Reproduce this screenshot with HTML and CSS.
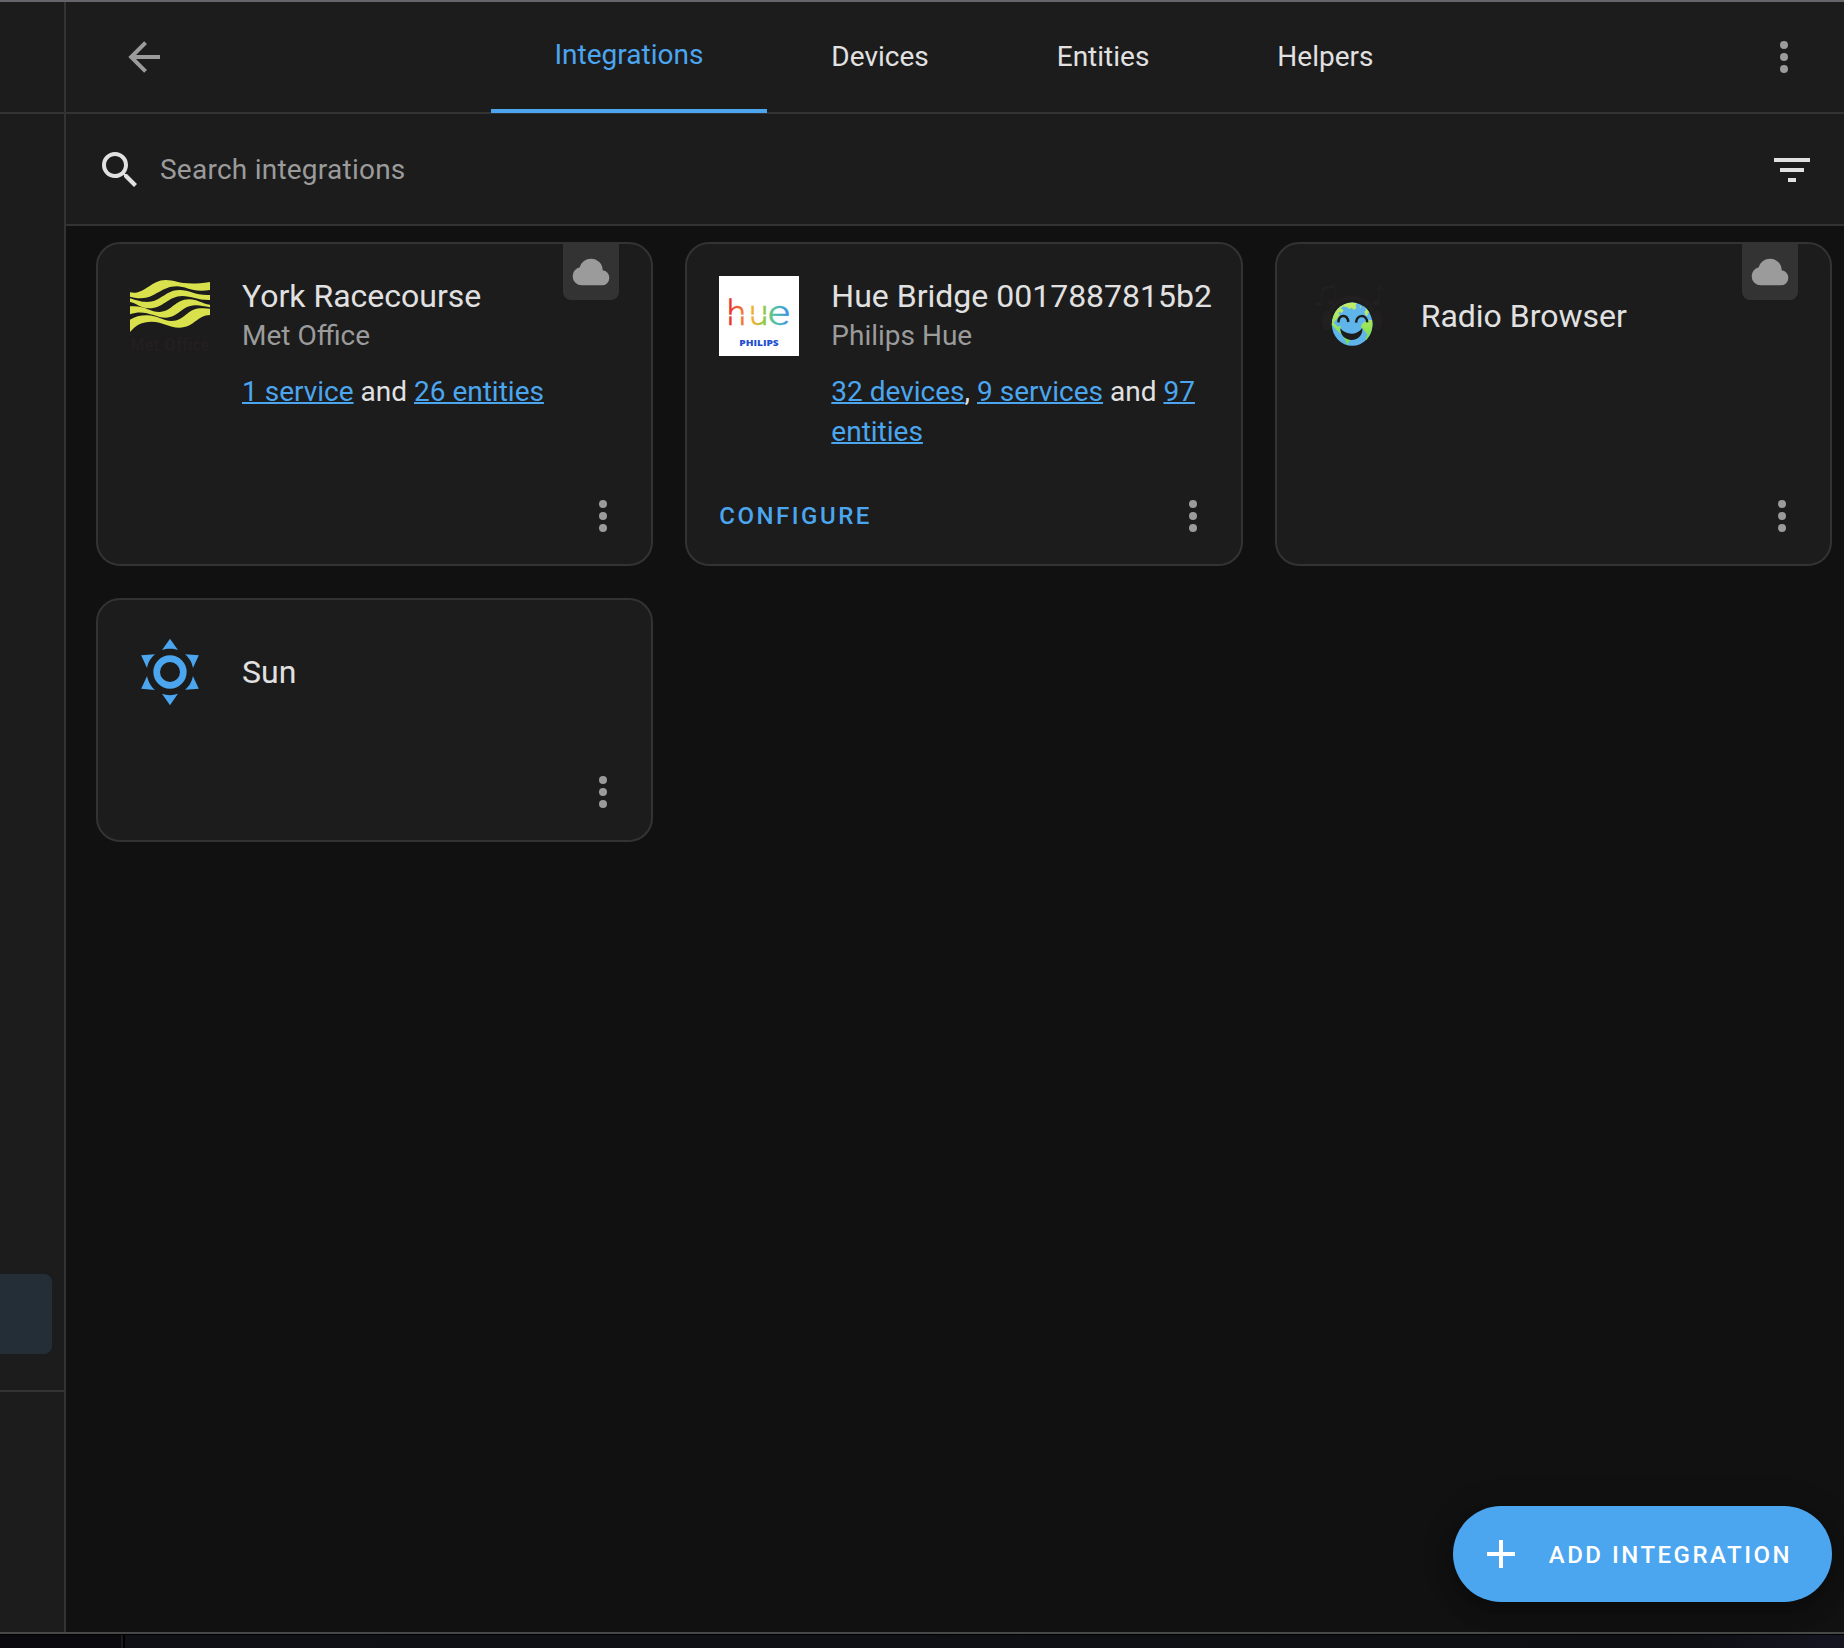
FILE: index.html
```html
<!DOCTYPE html>
<html lang="en">
<head>
<meta charset="utf-8">
<title>Integrations</title>
<link rel="stylesheet" href="styles.css">
</head>
<body>
<svg class="defs" width="0" height="0" aria-hidden="true">
  <symbol id="dots" viewBox="0 0 24 24"><path d="M12,16A2,2 0 0,1 14,18A2,2 0 0,1 12,20A2,2 0 0,1 10,18A2,2 0 0,1 12,16M12,10A2,2 0 0,1 14,12A2,2 0 0,1 12,14A2,2 0 0,1 10,12A2,2 0 0,1 12,10M12,4A2,2 0 0,1 14,6A2,2 0 0,1 12,8A2,2 0 0,1 10,6A2,2 0 0,1 12,4Z"/></symbol>
  <symbol id="cloud" viewBox="0 0 24 24"><path d="M6.5 20Q4.22 20 2.61 18.43 1 16.85 1 14.58 1 12.63 2.17 11.1 3.35 9.57 5.25 9.15 5.88 6.85 7.75 5.43 9.63 4 12 4 14.93 4 16.96 6.04 19 8.07 19 11 20.73 11.2 21.86 12.5 23 13.78 23 15.5 23 17.38 21.69 18.69 20.38 20 18.5 20Z"/></symbol>
</svg>
<div class="window">
  <aside class="sidebar">
    <div class="sidebar-head"></div>
    <div class="sidebar-list"><div class="sidebar-active"></div></div>
    <div class="sidebar-foot"></div>
  </aside>
  <main class="main">
    <header class="toolbar">
      <svg class="icon muted" viewBox="0 0 24 24"><path d="M20,11V13H8L13.5,18.5L12.08,19.92L4.16,12L12.08,4.08L13.5,5.5L8,11H20Z"/></svg>
      <nav class="tabs">
        <a class="tab active">Integrations</a>
        <a class="tab">Devices</a>
        <a class="tab">Entities</a>
        <a class="tab">Helpers</a>
      </nav>
      <svg class="icon muted"><use href="#dots"/></svg>
    </header>
    <div class="search">
      <svg class="icon" viewBox="0 0 24 24"><path d="M9.5,3A6.5,6.5 0 0,1 16,9.5C16,11.11 15.41,12.59 14.44,13.73L14.71,14H15.5L20.5,19L19,20.5L14,15.5V14.71L13.73,14.44C12.59,15.41 11.11,16 9.5,16A6.5,6.5 0 0,1 3,9.5A6.5,6.5 0 0,1 9.5,3M9.5,5C7,5 5,7 5,9.5C5,12 7,14 9.5,14C12,14 14,12 14,9.5C14,7 12,5 9.5,5Z"/></svg>
      <span class="search-label">Search integrations</span>
      <svg class="icon" viewBox="0 0 24 24"><path d="M6,13H18V11H6M3,6V8H21V6M10,18H14V16H10V18Z"/></svg>
    </div>
    <section class="grid">
      <article class="card">
        <div class="badge"><svg class="cloud"><use href="#cloud"/></svg></div>
        <div class="card-head">
          <svg class="logo" viewBox="30 33 240 240">
            <g fill="#d9e24c">
              <path d="M30 82C72 92 92 45 137 45C170 45 185 64 270 51V75C215 83 200 64 170 64C125 64 105 100 62 100C48 100 38 97 30 95Z"/>
              <path d="M30 100C50 106 62 111 80 111C122 111 137 75 178 75C210 75 225 92 270 90V105C235 106 215 93 187 93C145 93 130 130 88 130C60 130 48 113 30 111Z"/>
              <path d="M30 124C75 120 90 141 118 141C155 141 165 103 207 103C235 103 245 117 270 119V127C250 124 240 120 225 121C185 122 175 158 137 158C105 158 75 131 30 148Z"/>
              <path d="M30 164C45 155 60 151 80 151C115 151 125 168 155 168C195 168 200 132 240 130C252 129 260 130 270 131V150C232 150 222 188 178 188C145 188 130 170 95 170C65 170 48 180 30 201Z"/>
            </g>
            <text x="31" y="257" class="met-text" textLength="237" lengthAdjust="spacingAndGlyphs">Met Office</text>
          </svg>
          <div class="titles"><div class="title">York Racecourse</div><div class="subtitle">Met Office</div></div>
        </div>
        <p class="links"><a>1 service</a> and <a>26 entities</a></p>
        <div class="actions"><svg class="icon muted"><use href="#dots"/></svg></div>
      </article>
      <article class="card">
        <div class="card-head">
          <svg class="logo" viewBox="27 33 240 240">
            <defs><linearGradient id="hue" gradientUnits="userSpaceOnUse" x1="58" y1="0" x2="237" y2="0">
              <stop offset="0" stop-color="#e8302f"/><stop offset=".24" stop-color="#ee7d35"/><stop offset=".4" stop-color="#efb135"/><stop offset=".58" stop-color="#93c83e"/><stop offset=".75" stop-color="#52c2a0"/><stop offset="1" stop-color="#3b8fe8"/>
            </linearGradient></defs>
            <rect x="27" y="33" width="240" height="240" fill="#fff"/>
            <text class="hue-text" y="180" fill="url(#hue)"><tspan x="50">h</tspan><tspan x="117">u</tspan><tspan x="173" textLength="67" lengthAdjust="spacingAndGlyphs">e</tspan></text>
            <rect x="50" y="149" width="122" height="5" fill="#fff"/>
            <text class="philips-text" x="88" y="243" textLength="118" lengthAdjust="spacingAndGlyphs">PHILIPS</text>
          </svg>
          <div class="titles"><div class="title">Hue Bridge 0017887815b2</div><div class="subtitle">Philips Hue</div></div>
        </div>
        <p class="links"><a>32 devices</a>, <a>9 services</a> and <a>97 entities</a></p>
        <div class="actions"><span class="configure">CONFIGURE</span><svg class="icon muted"><use href="#dots"/></svg></div>
      </article>
      <article class="card">
        <div class="badge"><svg class="cloud"><use href="#cloud"/></svg></div>
        <div class="card-head">
          <svg class="logo" viewBox="-4 18 240 240">
            <defs>
              <clipPath id="globe"><ellipse cx="125.500" cy="162.500" rx="61" ry="65"/></clipPath>
              <linearGradient id="land" x1="0" y1="0" x2="0" y2="1"><stop offset="0" stop-color="#c8ee6e"/><stop offset="1" stop-color="#76dc4c"/></linearGradient>
            </defs>
            <g fill="#221f20">
              <path d="M58 124C75 62 175 62 192 124L183 126C168 78 82 78 67 126Z"/>
              <ellipse cx="50" cy="151" rx="17" ry="30"/><ellipse cx="200" cy="151" rx="17" ry="30"/>
              <ellipse cx="25" cy="102" rx="11" ry="7"/><ellipse cx="63" cy="97" rx="11" ry="7"/><ellipse cx="196" cy="99" rx="12" ry="8"/>
              <path d="M33 53L74 42V97H70V53L37 62V102H33ZM204 42C209 55 218 52 222 60L208 58V99H204Z"/>
            </g>
            <g clip-path="url(#globe)">
              <rect x="60" y="94" width="130" height="136" fill="#5fb5e9"/>
              <g fill="url(#land)">
                <path d="M108 92L140 98L135 108L139 113L131 120L124 113L118 117L110 112L98 109L91 117L100 121L94 128L84 126L88 136L80 146L70 158L82 170L92 168L89 181L100 187L118 194L131 199L117 212L111 226L105 210L96 195L80 181L66 166L60 170V120L85 98Z"/>
                <path d="M158 105L173 113L181 127L171 129L174 135L166 137L162 125L168 119ZM190 150V200L174 210L168 218L166 204L172 193L158 178L151 170L157 160L166 154L180 150Z"/>
              </g>
              <path d="M92 117L98 119L93 122ZM147 110L153 108L151 114Z" fill="#c8ee6e"/>
            </g>
            <g fill="none" stroke="#1c1c1c" stroke-width="7.500">
              <path d="M84 157C86 132 111 132 114 156"/><path d="M137 158C140 132 168 132 171 157"/>
            </g>
            <path d="M90 175C108 197 140 197 156 174C158 194 144 210 124 210C104 210 90 196 90 175Z" fill="#1c1c1c"/>
          </svg>
          <div class="titles"><div class="title">Radio Browser</div></div>
        </div>
        <div class="actions"><svg class="icon muted"><use href="#dots"/></svg></div>
      </article>
      <article class="card">
        <div class="card-head">
          <svg class="logo sun" viewBox="0 0 24 24"><path d="M12,7A5,5 0 0,1 17,12A5,5 0 0,1 12,17A5,5 0 0,1 7,12A5,5 0 0,1 12,7M12,9A3,3 0 0,0 9,12A3,3 0 0,0 12,15A3,3 0 0,0 15,12A3,3 0 0,0 12,9M12,2L14.39,5.42C13.65,5.15 12.84,5 12,5C11.16,5 10.35,5.15 9.61,5.42L12,2M3.34,7L7.5,6.65C6.9,7.16 6.36,7.78 5.94,8.5C5.5,9.24 5.25,10 5.11,10.79L3.34,7M3.36,17L5.12,13.23C5.26,14 5.53,14.78 5.95,15.5C6.37,16.24 6.91,16.86 7.5,17.37L3.36,17M20.65,7L18.88,10.79C18.74,10 18.47,9.23 18.05,8.5C17.63,7.78 17.1,7.15 16.5,6.64L20.65,7M20.64,17L16.5,17.36C17.09,16.85 17.62,16.22 18.04,15.5C18.46,14.77 18.73,14 18.87,13.21L20.64,17M12,22L9.59,18.56C10.33,18.83 11.14,19 12,19C12.82,19 13.63,18.83 14.37,18.56L12,22Z"/></svg>
          <div class="titles"><div class="title">Sun</div></div>
        </div>
        <div class="actions"><svg class="icon muted"><use href="#dots"/></svg></div>
      </article>
    </section>
    <button class="fab"><svg class="icon" viewBox="0 0 24 24"><path d="M19,13H13V19H11V13H5V11H11V5H13V11H19V13Z"/></svg><span class="fab-label">ADD INTEGRATION</span></button>
  </main>
</div>
<div class="backdrop"><div class="backdrop-left"></div><div class="backdrop-right"></div></div>
</body>
</html>
```
FILE: styles.css
```css
* { box-sizing: border-box; }
body {
  margin: 0;
  width: 1844px;
  height: 1648px;
  overflow: hidden;
  background: #000;
  color: #e1e1e1;
  font: 28px/40px Roboto, sans-serif;
}
.defs { position: absolute; }
.window {
  display: flex;
  height: 1634px;
  border-top: 2px solid #65656c;
  border-bottom: 2px solid #484848;
  background: #111;
}
.sidebar {
  display: flex;
  flex-direction: column;
  width: 66px;
  border-right: 2px solid #333;
  background: #1c1c1c;
}
.sidebar-head { height: 112px; border-bottom: 2px solid #333; }
.sidebar-list {
  flex: 1;
  display: flex;
  flex-direction: column;
  justify-content: flex-end;
  padding: 0 12px 36px 0;
}
.sidebar-active { height: 80px; border-radius: 0 8px 8px 0; background: #242e36; }
.sidebar-foot { height: 242px; border-top: 2px solid #333; }
.main { flex: 1; display: flex; flex-direction: column; min-width: 0; }
.icon { flex: none; display: block; width: 48px; height: 48px; fill: currentColor; }
.muted { color: #9b9b9b; }
.toolbar {
  display: flex;
  align-items: center;
  height: 112px;
  padding: 0 36px 2px 54px;
  background: #1c1c1c;
  box-shadow: inset 0 -2px #333;
}
.tabs { flex: 1; display: flex; justify-content: center; align-self: flex-start; height: 111px; }
.tab {
  display: flex;
  align-items: center;
  padding: 0 64px 1px;
}
.tab.active { color: #4ba6ef; border-bottom: 4px solid #4ba6ef; }
.search {
  display: flex;
  align-items: center;
  gap: 16px;
  height: 112px;
  padding: 0 28px 0 30px;
  background: #1c1c1c;
  box-shadow: inset 0 -2px #333;
}
.search-label { flex: 1; color: #9b9b9b; letter-spacing: .24px; }
.grid {
  display: grid;
  grid-template-columns: repeat(3, 1fr);
  gap: 32px;
  padding: 16px 12px 0 30px;
}
.card {
  position: relative;
  display: flex;
  flex-direction: column;
  min-height: 244px;
  border: 2px solid #333;
  border-radius: 24px;
  background: #1c1c1c;
}
.badge {
  position: absolute;
  top: 0;
  right: 32px;
  padding: 8px;
  border-radius: 0 0 8px 8px;
  background: #333;
  color: #9b9b9b;
}
.cloud { display: block; width: 40px; height: 40px; fill: currentColor; }
.card-head { display: flex; align-items: center; gap: 32px; padding: 32px 0 0 32px; }
.logo { flex: none; width: 80px; height: 80px; overflow: visible; }
.sun { fill: #4ba6ef; }
.titles { white-space: nowrap; }
.title { font-size: 32px; }
.subtitle { color: #9b9b9b; }
.links { margin: 16px 32px 16px 144px; }
.links a {
  color: #4ba6ef;
  text-decoration: underline;
  text-decoration-thickness: 2px;
  text-decoration-skip-ink: none;
}
.actions {
  display: flex;
  align-items: center;
  height: 96px;
  margin-top: auto;
  padding: 0 24px 0 32px;
}
.actions .icon { margin-left: auto; }
.configure { color: #4ba6ef; font-size: 24px; font-weight: 500; letter-spacing: 2.5px; }
.met-text { font: bold 54px "Open Sans", sans-serif; fill: #231f20; }
.hue-text { font: 300 105px Roboto, sans-serif; stroke: url(#hue); stroke-width: 1; }
.philips-text { font: 900 26px "Open Sans", sans-serif; fill: #1f50cf; }
.fab {
  display: flex;
  align-items: center;
  gap: 24px;
  align-self: flex-end;
  height: 96px;
  margin: auto 12px 30px 0;
  padding: 0 40px 0 24px;
  border: 0;
  border-radius: 48px;
  background: #4ba6ef;
  color: #fff;
  font: 500 24px Roboto, sans-serif;
  letter-spacing: 2.5px;
  box-shadow: 0 6px 10px -2px rgba(0,0,0,.2), 0 12px 20px rgba(0,0,0,.14), 0 2px 36px rgba(0,0,0,.12);
}
.fab-label { padding-top: 2px; }
.backdrop { display: flex; height: 14px; padding-top: 1px; }
.backdrop-left { width: 123px; border-right: 2px solid #1c1c1e; background: #0a0a0e; }
.backdrop-right { flex: 1; margin-left: 2px; background: linear-gradient(90deg, #101117, #0e0f13 90%, #151522); }
```
